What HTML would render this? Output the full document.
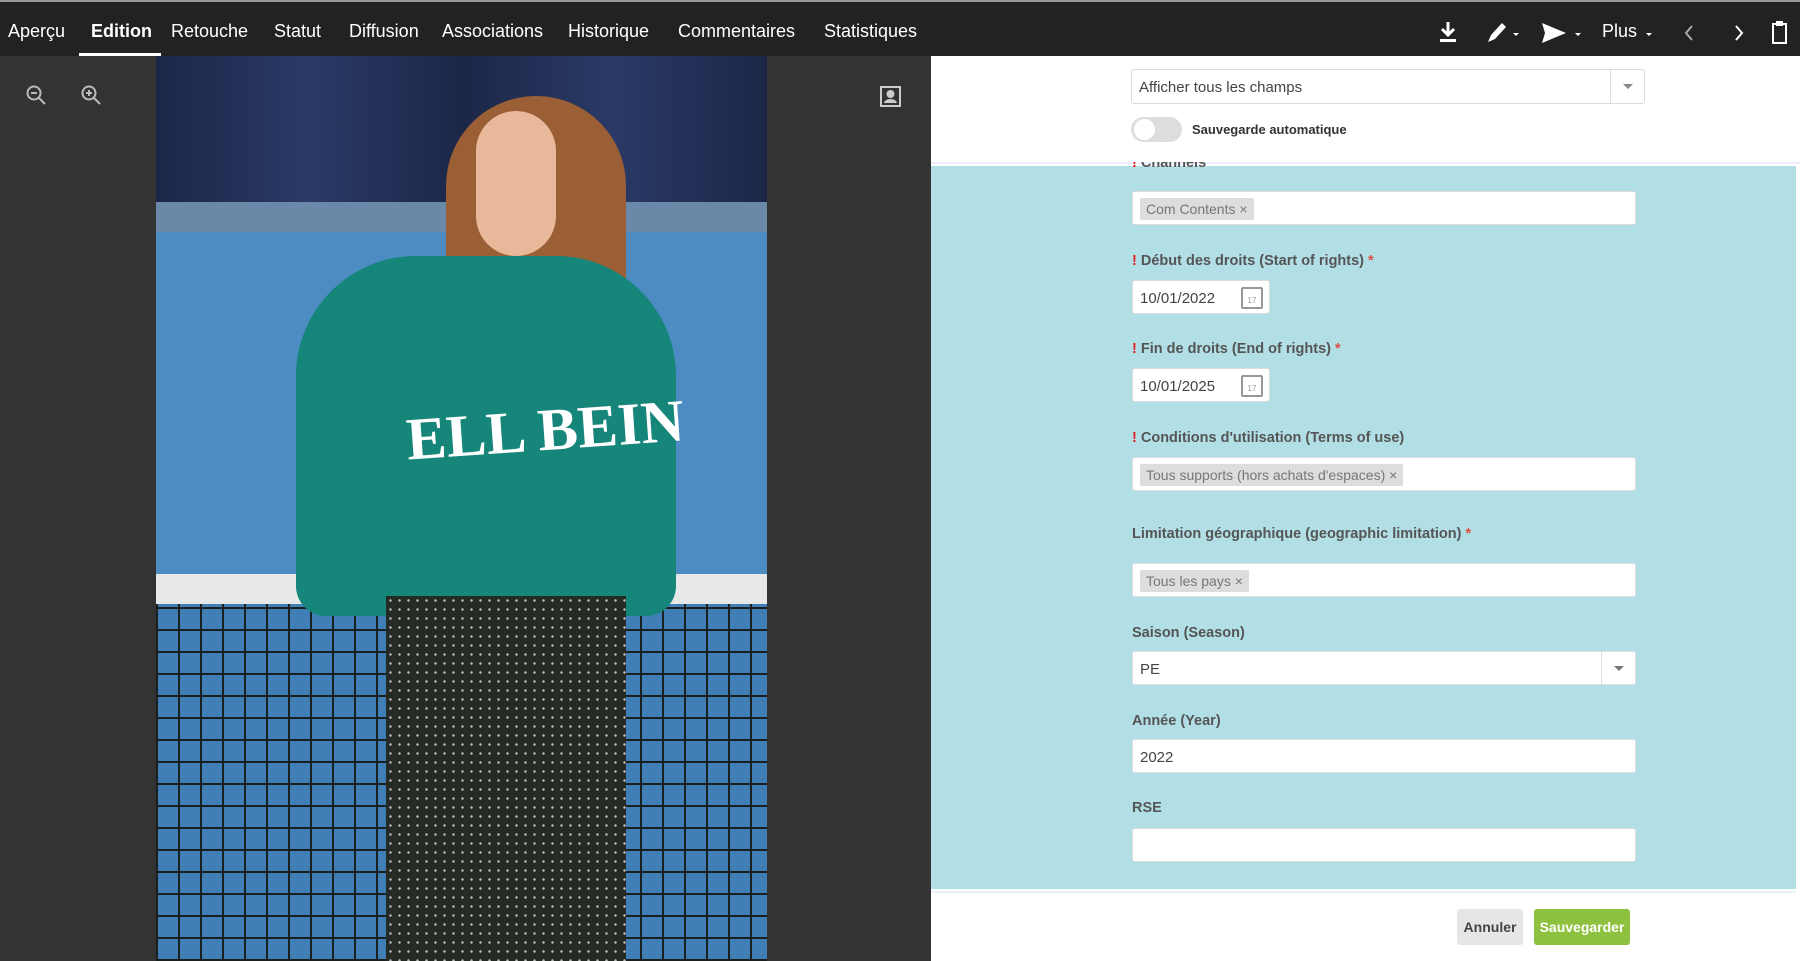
<!DOCTYPE html>
<html><head><meta charset="utf-8"><style>
*{box-sizing:border-box;margin:0;padding:0}
body{width:1800px;height:961px;overflow:hidden;font-family:"Liberation Sans",sans-serif;background:#fff;position:relative}
.nav{position:absolute;left:0;top:0;width:1800px;height:56px;background:#222;border-top:2px solid #999}
.nav span{position:absolute;top:19px;color:#fff;font-size:18px}
.left{position:absolute;left:0;top:56px;width:931px;height:905px;background:#333}
.abs{position:absolute}
.lbl{position:absolute;left:1132px;font-size:14.5px;font-weight:bold;color:#555}
.lbl b{color:#e02020}
.lbl i{color:#e05040;font-style:normal}
.inp{position:absolute;left:1132px;width:504px;height:34px;background:#fff;border:1px solid #ddd;border-radius:3px;font-size:15px;color:#444;padding:9px 7px}
.tag{display:inline-block;background:#ddd;color:#777;font-size:14px;padding:3px 6px;border-radius:2px;margin-top:-4px}
.date{width:138px}
.cal{position:absolute;right:6px;top:6px;width:22px;height:22px;border:2px solid #999;border-radius:2px;font-size:8px;color:#999;text-align:center;padding-top:7px}
</style></head><body>
<div class="nav">
<span style="left:8px">Aperçu</span>
<span style="left:91px;font-weight:bold">Edition</span>
<div class="abs" style="left:79px;top:51px;width:82px;height:3px;background:#fff"></div>
<span style="left:171px">Retouche</span>
<span style="left:274px">Statut</span>
<span style="left:349px">Diffusion</span>
<span style="left:442px">Associations</span>
<span style="left:568px">Historique</span>
<span style="left:678px">Commentaires</span>
<span style="left:824px">Statistiques</span>
<svg class="abs" style="left:1438px;top:18px" width="350" height="26" fill="#fff" stroke="#fff">
<path d="M10 2v12M4 9l6 6 6-6" stroke-width="3" fill="none"/><rect x="2" y="19" width="16" height="3" stroke="none"/>
<path d="M50 22l3-7 11-12 4 4-11 12z" stroke="none"/><path d="M75 13l3 3 3-3z" stroke="none"/>
<path d="M104 3l24 10-24 10 3-10z" stroke="none"/><path d="M137 13l3 3 3-3z" stroke="none"/>
<path d="M208 13l3 3 3-3z" stroke="none"/>
<path d="M254 6l-6 7 6 7" fill="none" stroke="#aaa" stroke-width="2"/>
<path d="M298 6l6 7-6 7" fill="none" stroke-width="2"/>
<rect x="335" y="4" width="13" height="19" fill="none" stroke-width="2"/><rect x="338" y="1" width="7" height="5" stroke="none"/>
</svg>
<span style="left:1602px">Plus</span>
</div>
<div class="left">
<svg class="abs" style="left:25px;top:28px" width="90" height="24" fill="none" stroke="#bbb" stroke-width="2"><circle cx="9" cy="9" r="6.5"/><path d="M14 14l6 6M6 9h6"/><circle cx="64" cy="9" r="6.5"/><path d="M69 14l6 6M61 9h6M64 6v6"/></svg>
<svg class="abs" style="left:880px;top:30px" width="22" height="22" fill="none" stroke="#ccc" stroke-width="2"><rect x="1" y="1" width="19" height="19"/><circle cx="10.5" cy="8" r="3" fill="#ccc"/><path d="M5 17c1-4 10-4 11 0" fill="#ccc"/></svg>
<div class="abs" style="left:156px;top:0;width:611px;height:905px;overflow:hidden;background:#4d8cc2">
 <div class="abs" style="left:0;top:0;width:611px;height:146px;background:linear-gradient(90deg,#1c2648,#2a3a66,#1c2648,#2a3a66,#1c2648)"></div>
 <div class="abs" style="left:0;top:146px;width:611px;height:30px;background:#6a88a8"></div>
 <div class="abs" style="left:0;top:518px;width:611px;height:30px;background:#e8e8e8"></div>
 <div class="abs" style="left:0;top:548px;width:611px;height:357px;background:repeating-linear-gradient(90deg,#1a2020 0 2px,transparent 2px 22px),repeating-linear-gradient(0deg,#1a2020 0 2px,#3f7fb5 2px 22px)"></div>
 <div class="abs" style="left:290px;top:40px;width:180px;height:320px;background:#9a5f35;border-radius:90px 90px 40px 40px"></div>
 <div class="abs" style="left:320px;top:55px;width:80px;height:145px;background:#e8b89a;border-radius:40px"></div>
 <div class="abs" style="left:140px;top:200px;width:380px;height:360px;background:#16857a;border-radius:120px 120px 30px 30px"></div>
 <div class="abs" style="left:250px;top:340px;white-space:nowrap;color:#fff;font:bold 60px 'Liberation Serif',serif;transform:rotate(-4deg)">ELL BEIN</div>
 <div class="abs" style="left:230px;top:540px;width:240px;height:365px;background:radial-gradient(#bbb 1px,transparent 1.5px) 0 0/9px 9px,#252a25"></div>
</div>
</div>
<div class="abs" style="left:931px;top:56px;width:869px;height:108px;background:#fff;border-bottom:2px solid #eef"></div>
<div class="abs" style="left:1131px;top:69px;width:514px;height:35px;border:1px solid #ddd;border-radius:3px;font-size:15px;color:#444;padding:9px 7px">Afficher tous les champs<div class="abs" style="right:0;top:0;width:34px;height:33px;border-left:1px solid #ddd"><div class="abs" style="left:12px;top:14px;border:5px solid transparent;border-top:5px solid #888"></div></div></div>
<div class="abs" style="left:1131px;top:117px;width:51px;height:25px;border-radius:13px;background:#ddd"><div class="abs" style="left:3px;top:2px;width:21px;height:21px;border-radius:50%;background:#fff"></div></div>
<div class="abs" style="left:1192px;top:122px;font-size:13px;font-weight:bold;color:#333">Sauvegarde automatique</div>
<div class="abs" style="left:931px;top:166px;width:865px;height:723px;background:#b2dfe5"></div>
<div class="lbl" style="top:155px;clip-path:inset(7px 0 0 0)"><b>!</b> Channels</div>
<div class="inp" style="top:191px"><span class="tag">Com Contents ×</span></div>
<div class="lbl" style="top:253px"><b>!</b> Début des droits (Start of rights) <i>*</i></div>
<div class="inp date" style="top:280px">10/01/2022<div class="cal">17</div></div>
<div class="lbl" style="top:341px"><b>!</b> Fin de droits (End of rights) <i>*</i></div>
<div class="inp date" style="top:368px">10/01/2025<div class="cal">17</div></div>
<div class="lbl" style="top:430px"><b>!</b> Conditions d'utilisation (Terms of use)</div>
<div class="inp" style="top:457px"><span class="tag">Tous supports (hors achats d'espaces) ×</span></div>
<div class="lbl" style="top:526px">Limitation géographique (geographic limitation) <i>*</i></div>
<div class="inp" style="top:563px"><span class="tag">Tous les pays ×</span></div>
<div class="lbl" style="top:625px">Saison (Season)</div>
<div class="inp" style="top:651px">PE<div class="abs" style="right:0;top:0;width:34px;height:32px;border-left:1px solid #ddd"><div class="abs" style="left:12px;top:14px;border:5px solid transparent;border-top:5px solid #777"></div></div></div>
<div class="lbl" style="top:713px">Année (Year)</div>
<div class="inp" style="top:739px">2022</div>
<div class="lbl" style="top:800px">RSE</div>
<div class="inp" style="top:828px"></div>
<div class="abs" style="left:931px;top:891px;width:865px;height:2px;background:#eef2f5"></div>
<div class="abs" style="left:1457px;top:909px;width:66px;height:36px;background:#e6e6e6;border-radius:3px;font-size:14px;font-weight:bold;color:#444;text-align:center;line-height:36px">Annuler</div>
<div class="abs" style="left:1534px;top:909px;width:96px;height:36px;background:#8dc13f;border-radius:3px;font-size:14px;font-weight:bold;color:#fff;text-align:center;line-height:36px">Sauvegarder</div>
</body></html>
